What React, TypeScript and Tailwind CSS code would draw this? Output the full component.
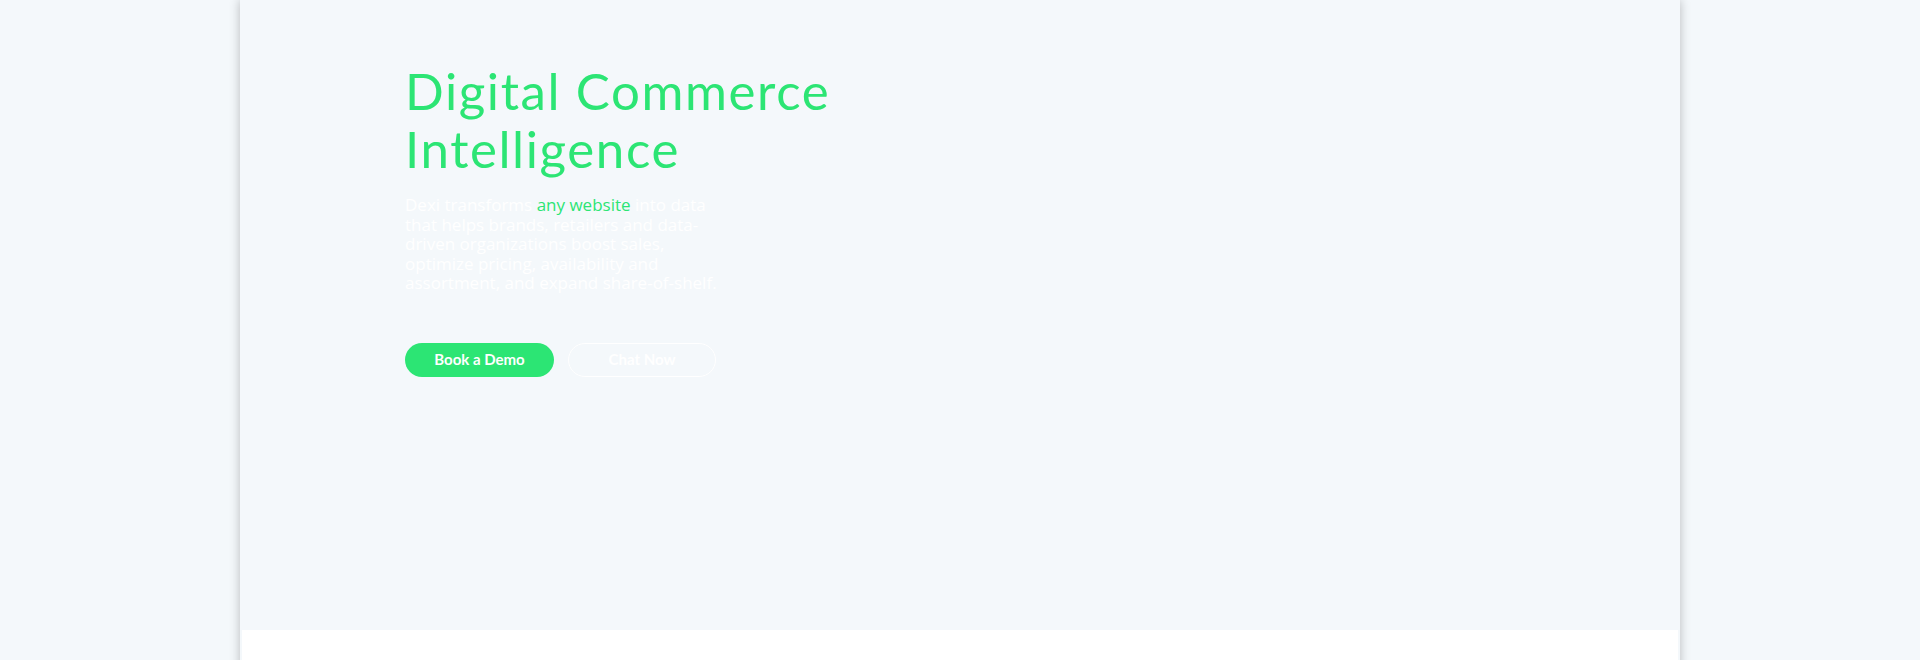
export default function App() {
  return (
    <div className="min-h-screen bg-[#f4f8fb]">
      <div className="mx-auto w-[1440px] bg-[#f4f8fb] shadow-[0_0_10px_rgba(0,0,0,0.25)]">
        {/* hero */}
        <section className="h-[630px] pl-[165px] pt-[62px]">
          <h1 className="font-['Lato',sans-serif] text-[51px] leading-[58px] tracking-[1.6px] text-[#2ce574]">
            Digital Commerce
            <br />
            Intelligence
          </h1>
          <p className="mt-[17px] w-[330px] font-['Open_Sans',sans-serif] text-[17px] leading-[19.5px] text-white">
            Dexi transforms <span className="text-[#2ce574]">any website</span> into data
            <br />
            that helps brands, retailers and data-
            <br />
            driven organizations boost sales,
            <br />
            optimize pricing, availability and
            <br />
            assortment, and expand share-of-shelf.
          </p>
          <div className="mt-[50px] flex gap-[14px] font-['Lato',sans-serif] text-[15px] font-bold">
            <button className="h-[34px] w-[149px] rounded-full bg-[#2ce574] text-white">
              Book a Demo
            </button>
            <button className="h-[34px] w-[148px] rounded-full border border-white text-white">
              Chat Now
            </button>
          </div>
        </section>
        {/* next section */}
        <section className="mx-[2px] h-[200px] bg-white" />
      </div>
    </div>
  );
}
